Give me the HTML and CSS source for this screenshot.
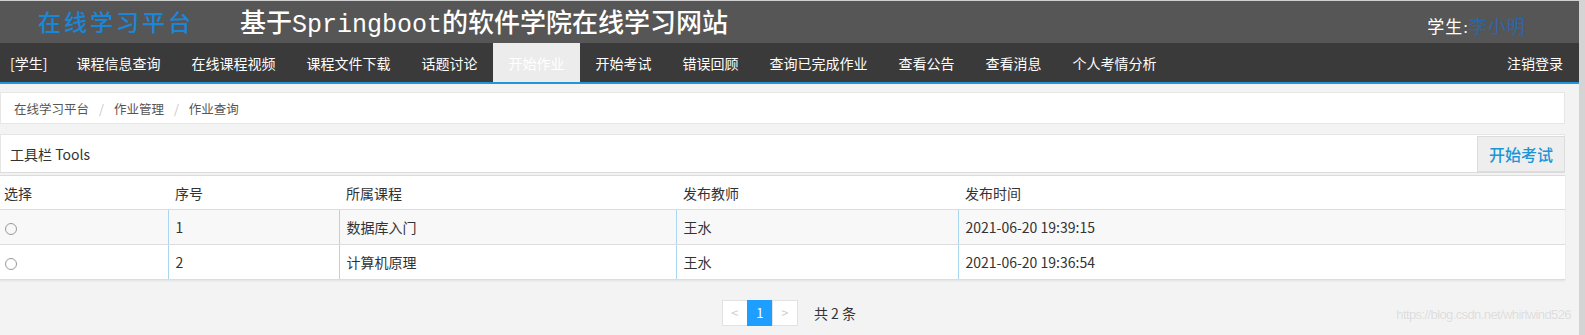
FILE: index.html
```html
<!DOCTYPE html>
<html lang="zh-CN">
<head>
    <meta charset="UTF-8">
    <title>作业查询</title>
    <link rel="stylesheet" href="styles.css">
</head>
<body>
    <div class="page">
        <div class="main">
            <div class="top">
                <div class="brand">
                    <span class="logo">在线学习平台</span>
                    <span class="site">基于<span class="latin">Springboot</span>的软件学院在线学习网站</span>
                </div>
                <div class="user">学生:<span class="name">李小明</span></div>
            </div>

            <div class="nav">
                <ul class="menu">
                    <li class="first">[学生]</li>
                    <li>课程信息查询</li>
                    <li>在线课程视频</li>
                    <li>课程文件下载</li>
                    <li>话题讨论</li>
                    <li class="active">开始作业</li>
                    <li>开始考试</li>
                    <li>错误回顾</li>
                    <li>查询已完成作业</li>
                    <li>查看公告</li>
                    <li>查看消息</li>
                    <li>个人考情分析</li>
                </ul>
                <div class="logout">注销登录</div>
            </div>

            <div class="content">
                <div class="card crumbs">
                    <span>在线学习平台</span><span class="sep">/</span><span>作业管理</span><span class="sep">/</span><span>作业查询</span>
                </div>

                <div class="card tools">
                    <span>工具栏 Tools</span>
                    <button class="btn">开始考试</button>
                </div>

                <table class="grid">
                    <thead>
                        <tr>
                            <th class="c1">选择</th>
                            <th class="c2">序号</th>
                            <th class="c3">所属课程</th>
                            <th class="c4">发布教师</th>
                            <th class="c5">发布时间</th>
                        </tr>
                    </thead>
                    <tbody>
                        <tr class="even">
                            <td><span class="radio"></span></td>
                            <td>1</td>
                            <td>数据库入门</td>
                            <td>王水</td>
                            <td>2021-06-20 19:39:15</td>
                        </tr>
                        <tr>
                            <td><span class="radio"></span></td>
                            <td>2</td>
                            <td>计算机原理</td>
                            <td>王水</td>
                            <td>2021-06-20 19:36:54</td>
                        </tr>
                    </tbody>
                </table>

                <div class="pager">
                    <span class="pg disabled">&lt;</span><span class="pg current">1</span><span class="pg disabled">&gt;</span>
                    <span class="count">共 2 条</span>
                </div>
            </div>

            <div class="watermark">https://blog.csdn.net/whirlwind526</div>
        </div>
        <div class="scrollbar"></div>
    </div>
</body>
</html>
```

FILE: styles.css
```css
body {
    margin: 0;
    font-family: "Noto Sans CJK SC", "Liberation Sans", sans-serif;
    background-color: #f3f3f3;
    color: #333;
}
.page {
    display: flex;
    height: 335px;
    overflow: hidden;
}
.main {
    flex: 1;
    position: relative;
}
.scrollbar {
    width: 6px;
    background: #d4d4d4;
}
.top {
    height: 42px;
    border-top: 1px solid #cfcfcf;
    background-color: #565656;
    display: flex;
    align-items: center;
    justify-content: space-between;
    padding: 0 53px 0 38px;
}
.brand {
    display: flex;
    align-items: center;
}
.logo {
    color: #1a86da;
    font-family: "Liberation Serif", "Noto Sans CJK SC", serif;
    font-size: 23px;
    font-weight: 500;
    letter-spacing: 3px;
    margin-right: 46px;
    margin-top: -3px;
}
.site {
    color: #fff;
    font-family: "Liberation Serif", "Noto Sans CJK SC", serif;
    font-size: 26px;
    font-weight: 500;
    margin-top: -2px;
}
.site .latin {
    font-family: "Liberation Mono", monospace;
    font-size: 25px;
}
.user {
    color: #fff;
    font-family: "Liberation Serif", "Noto Sans CJK SC", serif;
    font-size: 17px;
    padding-top: 5px;
    letter-spacing: 1px;
}
.user .name {
    color: #2a66aa;
    font-size: 18px;
}
.nav {
    height: 39px;
    background-color: #3a3a3a;
    border-bottom: 2px solid #2196db;
    display: flex;
    justify-content: space-between;
    align-items: stretch;
}
.menu {
    list-style: none;
    margin: 0;
    padding: 0;
    display: flex;
}
.menu li {
    color: #fff;
    font-size: 14px;
    padding: 0 15.5px;
    display: flex;
    align-items: center;
}
.menu li.first {
    padding-left: 10px;
    padding-right: 13.5px;
}
.menu li.active {
    background-color: #ececec;
    color: #fff;
    padding: 0 15.5px;
}
.logout {
    color: #fff;
    font-size: 14px;
    padding-right: 16px;
    display: flex;
    align-items: center;
}
.content {
    padding: 8px 14px 0 0;
}
.card {
    background: #fff;
    border: 1px solid #e6e6e6;
}
.crumbs {
    height: 30px;
    display: flex;
    align-items: center;
    padding-left: 13px;
    font-size: 12.5px;
    color: #555;
}
.crumbs .sep {
    color: #c8c8c8;
    margin: 0 10px;
}
.tools {
    margin-top: 10px;
    height: 37px;
    border-bottom-color: #dcdcdc;
    display: flex;
    align-items: center;
    justify-content: space-between;
    padding-left: 9px;
    font-size: 14px;
}
.btn {
    height: 36px;
    width: 88px;
    margin-right: -1px;
    background: #eeeeee;
    border: 1px solid #dcdcdc;
    color: #1a96d8;
    font-family: "Noto Sans CJK SC", sans-serif;
    font-size: 16px;
    font-weight: 500;
    padding: 0;
}
.grid {
    margin-top: 2px;
    width: 100%;
    border-collapse: collapse;
    background: #fff;
    border-top: 1px solid #dcdcdc;
    box-shadow: 0 1px 2px rgba(0, 0, 0, 0.08);
    font-size: 14px;
}
.grid th {
    height: 33px;
    text-align: left;
    font-weight: normal;
    color: #333;
    padding: 0 0 0 7px;
    border-bottom: 1px solid #dcdcdc;
}
.grid th.c1 {
    padding-left: 4px;
    width: 164px;
}
.grid th.c2 { width: 164px; }
.grid th.c3 { width: 330px; }
.grid th.c4 { width: 275px; }
.grid td {
    height: 34px;
    padding: 0 0 0 7px;
    color: #333;
    border-bottom: 1px solid #dcdcdc;
    border-left: 1px solid #a9d7f0;
}
.grid td:first-child {
    border-left: none;
    padding-left: 5px;
}
.grid tr.even td {
    background: #f8f8f8;
}
.radio {
    display: inline-block;
    width: 10px;
    height: 10px;
    border: 1px solid #999;
    border-radius: 50%;
    vertical-align: middle;
}
.pager {
    margin-top: 20px;
    display: flex;
    justify-content: center;
    align-items: center;
    font-size: 14px;
    padding-left: 14px;
}
.pg {
    width: 24px;
    height: 24px;
    line-height: 24px;
    text-align: center;
    background: #fff;
    border: 1px solid #e2e2e2;
    margin-left: -1px;
    font-size: 13px;
}
.pg.disabled {
    color: #cfcfcf;
}
.pg.current {
    background: #1e9fff;
    border-color: #1e9fff;
    color: #fff;
}
.count {
    margin-left: 16px;
    color: #333;
}
.watermark {
    position: absolute;
    right: 8px;
    bottom: 13px;
    font-family: "Liberation Sans", sans-serif;
    font-size: 13px;
    letter-spacing: -0.6px;
    color: #dcdcdc;
    text-shadow: 0 0 1px #fff;
}
```
